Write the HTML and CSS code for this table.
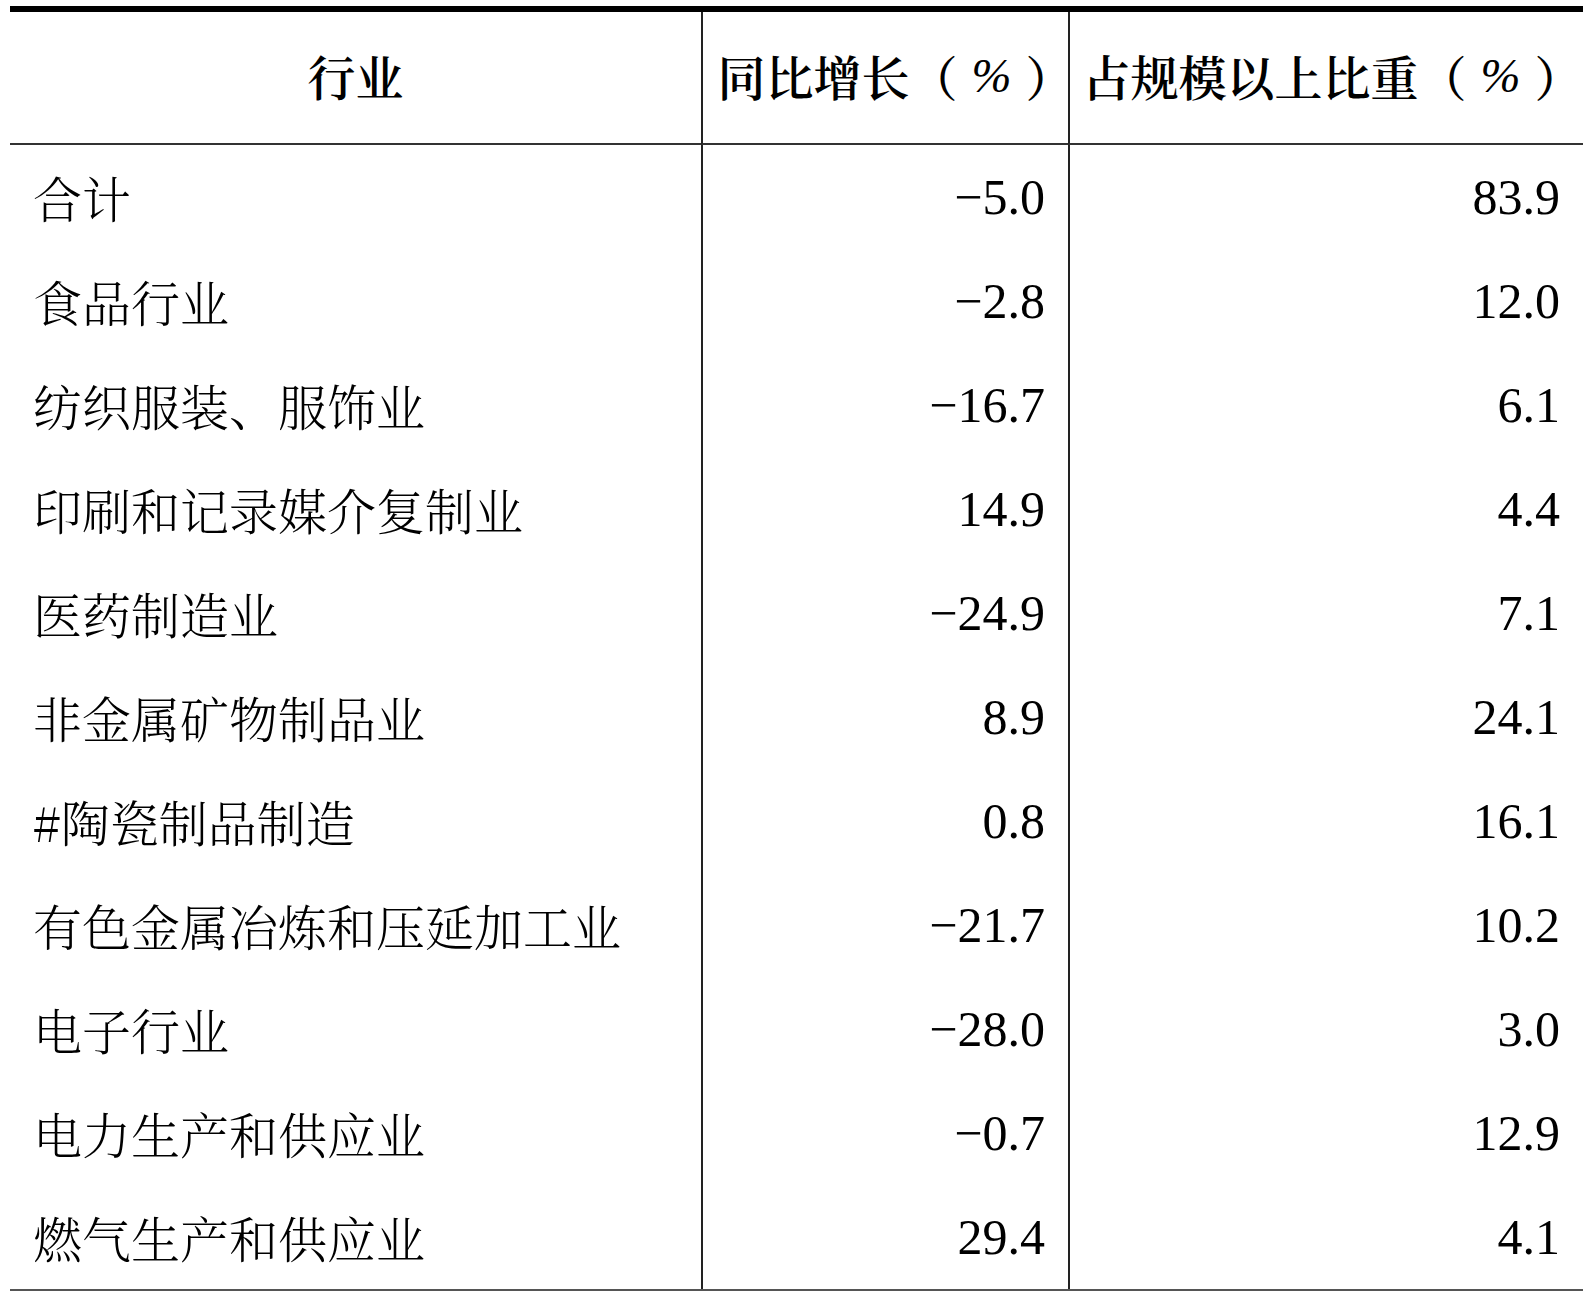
FILE: index.html
```html
<!DOCTYPE html>
<html lang="zh-CN">
<head>
<meta charset="utf-8">
<title>行业统计</title>
<link rel="stylesheet" href="styles.css">
</head>
<body>
<div class="table">
  <div class="cell head first">行业</div>
  <div class="cell head growth">同比增长（<span class="pct">%</span><span class="close">）</span></div>
  <div class="cell head">占规模以上比重（<span class="pct">%</span><span class="close">）</span></div>

  <div class="cell name">合计</div>
  <div class="cell num">−5.0</div>
  <div class="cell num">83.9</div>

  <div class="cell name">食品行业</div>
  <div class="cell num">−2.8</div>
  <div class="cell num">12.0</div>

  <div class="cell name">纺织服装、服饰业</div>
  <div class="cell num">−16.7</div>
  <div class="cell num">6.1</div>

  <div class="cell name">印刷和记录媒介复制业</div>
  <div class="cell num">14.9</div>
  <div class="cell num">4.4</div>

  <div class="cell name">医药制造业</div>
  <div class="cell num">−24.9</div>
  <div class="cell num">7.1</div>

  <div class="cell name">非金属矿物制品业</div>
  <div class="cell num">8.9</div>
  <div class="cell num">24.1</div>

  <div class="cell name">#陶瓷制品制造</div>
  <div class="cell num">0.8</div>
  <div class="cell num">16.1</div>

  <div class="cell name">有色金属冶炼和压延加工业</div>
  <div class="cell num">−21.7</div>
  <div class="cell num">10.2</div>

  <div class="cell name">电子行业</div>
  <div class="cell num">−28.0</div>
  <div class="cell num">3.0</div>

  <div class="cell name">电力生产和供应业</div>
  <div class="cell num">−0.7</div>
  <div class="cell num">12.9</div>

  <div class="cell name">燃气生产和供应业</div>
  <div class="cell num">29.4</div>
  <div class="cell num">4.1</div>
</div>
</body>
</html>
```

FILE: styles.css
```css
html, body {
  margin: 0;
  padding: 0;
  background: #fff;
}

body {
  color: #000;
  font-family: "Noto Serif CJK SC", "Noto Sans CJK SC", "Liberation Serif", serif;
}

.table {
  margin: 6px 0 0 10px;
  width: 1573px;
  display: grid;
  grid-template-columns: 691px 367px minmax(0, 1fr);
  grid-auto-rows: 104px;
  grid-template-rows: 133px;
  border-top: 6px solid #000;
  border-bottom: 2px solid #555;
}

.cell {
  box-sizing: border-box;
  display: flex;
  align-items: center;
  min-width: 0;
  border-left: 2px solid #222;
  white-space: nowrap;
}

.cell.name,
.cell.first {
  border-left: none;
}

.head {
  justify-content: center;
  border-bottom: 2px solid #333;
  font-size: 48px;
  font-weight: 600;
  padding-bottom: 4px;
}

.head.growth {
  padding-left: 8px;
}

.pct {
  font-family: "Liberation Serif", serif;
  font-style: italic;
  font-weight: 400;
  font-size: 48px;
  margin: 0 14px;
}

.close {
  margin-right: -12px;
}

.name {
  padding-left: 23px;
  font-size: 49px;
  font-weight: 300;
}

.num {
  justify-content: flex-end;
  padding-right: 23px;
  font-family: "Liberation Serif", serif;
  font-size: 50px;
}
```
